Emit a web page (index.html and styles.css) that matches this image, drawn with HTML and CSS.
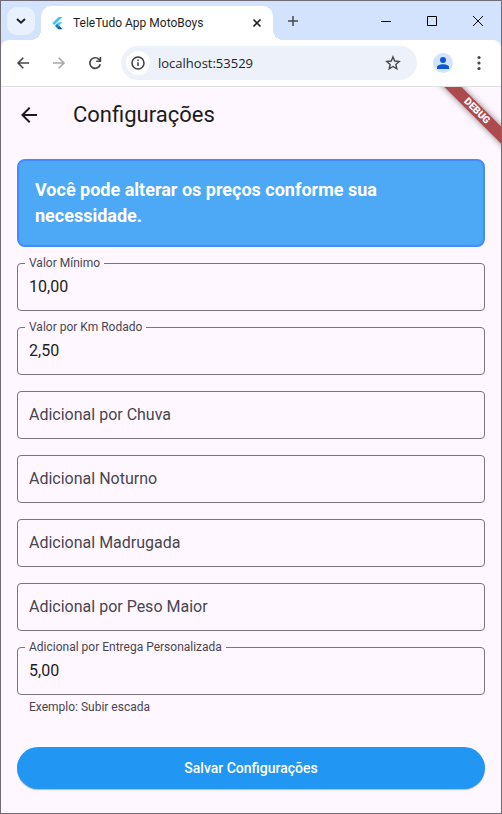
FILE: index.html
```html
<!DOCTYPE html>
<html lang="pt-BR">
<head>
<meta charset="utf-8">
<meta name="viewport" content="width=device-width, initial-scale=1">
<title>TeleTudo App MotoBoys</title>
<link rel="stylesheet" href="styles.css">
</head>
<body>
<div class="window">
  <header class="chrome">
    <div class="tabstrip">
      <button class="tab-search" aria-label="Pesquisar guias">
        <svg width="12" height="12" viewBox="0 0 12 12"><path d="M2 4 6 7.7l4-3.7" fill="none" stroke="#1f1f1f" stroke-width="2"/></svg>
      </button>
      <div class="tab">
        <svg class="favicon" width="16" height="16" viewBox="0 0 16 16"><path d="M9.5 2h4L5.3 10.1 3.3 8z" fill="#47c5fb"/><path d="M9.5 7.3h4l-3.5 3.5-2-2z" fill="#47c5fb"/><path d="m6 10.9 2-2.1 2 2-2 2.1z" fill="#0d7bd0"/><path d="m8 12.9 2-2.1 3.5 3.4h-4z" fill="#07569d"/></svg>
        <span class="tab-title">TeleTudo App MotoBoys</span>
        <button class="icon-button close-tab" aria-label="Fechar guia">
          <svg width="16" height="16" viewBox="0 0 16 16"><path d="m4.5 4.5 7 7m0-7-7 7" fill="none" stroke="#1f1f1f" stroke-width="1.6"/></svg>
        </button>
      </div>
      <button class="icon-button new-tab" aria-label="Nova guia">
        <svg width="16" height="16" viewBox="0 0 16 16"><path d="M8 3v10M3 8h10" fill="none" stroke="#474747" stroke-width="1.5"/></svg>
      </button>
      <div class="window-controls">
        <button class="icon-button" aria-label="Minimizar"><svg width="12" height="12" viewBox="0 0 12 12"><path d="M1 6.5h10" stroke="#000"/></svg></button>
        <button class="icon-button" aria-label="Maximizar"><svg width="12" height="12" viewBox="0 0 12 12"><path d="M1.5 1.5h9v9h-9z" fill="none" stroke="#000"/></svg></button>
        <button class="icon-button" aria-label="Fechar"><svg width="12" height="12" viewBox="0 0 12 12"><path d="m1 1 10 10m0-10L1 11" stroke="#000"/></svg></button>
      </div>
    </div>
    <div class="toolbar">
      <button class="icon-button nav" aria-label="Voltar"><svg width="16" height="16" viewBox="0 0 16 16"><path d="M14 8H3m5.3-5.3L3 8l5.3 5.3" fill="none" stroke="#474747" stroke-width="1.6"/></svg></button>
      <button class="icon-button nav" aria-label="Avançar" disabled><svg width="16" height="16" viewBox="0 0 16 16"><path d="M2 8h11M7.7 2.7 13 8l-5.3 5.3" fill="none" stroke="#a8a8a8" stroke-width="1.6"/></svg></button>
      <button class="icon-button nav" aria-label="Recarregar"><svg width="16" height="16" viewBox="0 0 16 16"><path d="M13.3 9.3A5.3 5.3 0 1 1 12 4.4L13.5 6" fill="none" stroke="#474747" stroke-width="1.7"/><path d="M14.2 2v5h-5V5.4h3.400V2z" fill="#474747"/></svg></button>
      <div class="omnibox">
        <button class="site-info" aria-label="Informações do site"><svg width="16" height="16" viewBox="0 0 16 16"><circle cx="8" cy="8" r="6" fill="none" stroke="#3c3c3c" stroke-width="1.5"/><path d="M8 7.3V11M8 4.6v1.5" stroke="#3c3c3c" stroke-width="1.5"/></svg></button>
        <input class="url" type="text" aria-label="Endereço" value="localhost:53529">
        <button class="icon-button" aria-label="Favoritar"><svg width="16" height="16" viewBox="0 0 16 16"><path d="m8 1.9 1.75 4.15 4.45.4-3.38 2.95 1.01 4.4L8 11.45 4.17 13.8l1.01-4.4L1.8 6.45l4.45-.4z" fill="none" stroke="#474747" stroke-width="1.4"/></svg></button>
      </div>
      <button class="avatar" aria-label="Perfil"><svg width="14" height="14" viewBox="0 0 14 14"><circle cx="7" cy="4" r="3" fill="#0b57d0"/><path d="M1 13v-2c0-2 4-2.8 6-2.8s6 .8 6 2.8v2z" fill="#0b57d0"/></svg></button>
      <button class="icon-button menu" aria-label="Menu"><svg width="16" height="16" viewBox="0 0 16 16" fill="#474747"><circle cx="8" cy="2.5" r="1.6"/><circle cx="8" cy="8" r="1.6"/><circle cx="8" cy="13.5" r="1.6"/></svg></button>
    </div>
  </header>

  <main class="app">
    <div class="debug" aria-hidden="true"><span class="debug-ribbon">DEBUG</span></div>
    <div class="appbar">
      <button class="icon-button back" aria-label="Voltar à tela anterior"><svg width="24" height="24" viewBox="0 0 24 24"><path d="M20 11H7.83l5.59-5.59L12 4l-8 8 8 8 1.41-1.41L7.83 13H20z" fill="#1d1b20"/></svg></button>
      <h1 class="title">Configurações</h1>
    </div>
    <form class="form">
      <p class="notice">Você pode alterar os preços conforme sua necessidade.</p>
      <div class="field"><input id="minimo" type="text" placeholder=" " value="10,00"><label for="minimo">Valor Mínimo</label></div>
      <div class="field"><input id="km" type="text" placeholder=" " value="2,50"><label for="km">Valor por Km Rodado</label></div>
      <div class="field"><input id="chuva" type="text" placeholder=" "><label for="chuva">Adicional por Chuva</label></div>
      <div class="field"><input id="noturno" type="text" placeholder=" "><label for="noturno">Adicional Noturno</label></div>
      <div class="field"><input id="madrugada" type="text" placeholder=" "><label for="madrugada">Adicional Madrugada</label></div>
      <div class="field"><input id="peso" type="text" placeholder=" "><label for="peso">Adicional por Peso Maior</label></div>
      <div class="field"><input id="entrega" type="text" placeholder=" " value="5,00" aria-describedby="entrega-ajuda"><label for="entrega">Adicional por Entrega Personalizada</label>
        <p class="helper" id="entrega-ajuda">Exemplo: Subir escada</p></div>
      <button class="save" type="button">Salvar Configurações</button>
    </form>
  </main>
</div>
</body>
</html>
```
FILE: styles.css
```css
* { box-sizing: border-box; }

body {
  margin: 0;
  font-family: Roboto, sans-serif;
  color: #1d1b20;
}

button, input { font: inherit; }
button { border: 0; padding: 0; background: none; }
svg { display: block; }

.window {
  display: flex;
  flex-direction: column;
  min-height: 100vh;
  border: 1px solid #706b74;
  background: #fef7ff;
}

.icon-button {
  display: flex;
  align-items: center;
  justify-content: center;
  flex: none;
}

/* Browser frame */
.chrome {
  background: #d3e3fd;
  font-family: "Open Sans", sans-serif;
}

.tabstrip {
  display: flex;
  align-items: center;
  height: 39px;
  padding-left: 6px;
}

.tab-search {
  display: flex;
  align-items: center;
  justify-content: center;
  width: 28px;
  height: 28px;
  border-radius: 10px;
  background: #e9f1fe;
}

.tab {
  position: relative;
  display: flex;
  align-items: center;
  align-self: flex-end;
  flex: 0 1 232px;
  min-width: 0;
  height: 34px;
  margin-left: 6px;
  padding: 0 8px;
  border-radius: 10px 10px 0 0;
  background: #fff;
}

.tab::before,
.tab::after {
  content: "";
  position: absolute;
  bottom: 0;
  width: 10px;
  height: 10px;
}
.tab::before { right: 100%; background: radial-gradient(circle at 0 0, transparent 10px, #fff 10px); }
.tab::after { left: 100%; background: radial-gradient(circle at 100% 0, transparent 10px, #fff 10px); }

.tab-title {
  flex: 1;
  min-width: 0;
  margin-left: 8px;
  overflow: hidden;
  font-family: Roboto, sans-serif;
  font-size: 12px;
  line-height: 16px;
  white-space: nowrap;
  color: #1f1f1f;
}

.new-tab { width: 28px; height: 28px; margin-left: 6px; }

.window-controls {
  display: flex;
  align-self: stretch;
  margin-left: auto;
}
.window-controls .icon-button { width: 46px; }

.toolbar {
  display: flex;
  align-items: center;
  height: 47px;
  padding: 0 10px 0 4px;
  border-bottom: 1px solid #dfe1e0;
  border-radius: 8px 8px 0 0;
  background: #fff;
}

.nav { width: 36px; height: 34px; }

.omnibox {
  display: flex;
  align-items: center;
  flex: 1;
  min-width: 0;
  height: 34px;
  margin-left: 8px;
  padding: 0 16px 0 5px;
  border-radius: 17px;
  background: #ecf1fa;
}

.site-info {
  display: flex;
  align-items: center;
  justify-content: center;
  flex: none;
  width: 24px;
  height: 24px;
  border-radius: 12px;
  background: #fff;
}

.url {
  flex: 1;
  min-width: 0;
  padding: 0 8px;
  border: 0;
  outline: 0;
  background: none;
  font-size: 13px;
  color: #1f1f1f;
}

.avatar {
  display: flex;
  align-items: center;
  justify-content: center;
  flex: none;
  width: 20px;
  height: 20px;
  margin-left: 16px;
  border-radius: 50%;
  background: #d3e3fd;
}

.menu { width: 24px; height: 24px; margin-left: 14px; }

/* Application */
.app {
  position: relative;
  flex: 1;
}

.appbar {
  display: flex;
  align-items: center;
  height: 56px;
  padding: 0 16px;
}

.title {
  margin: 0 0 0 32px;
  font-size: 22px;
  font-weight: 400;
  line-height: 28px;
}

.debug {
  position: absolute;
  top: 0;
  right: 0;
  width: 72px;
  height: 72px;
  overflow: hidden;
  pointer-events: none;
}

.debug-ribbon {
  position: absolute;
  top: 18px;
  right: -26px;
  width: 100px;
  height: 12px;
  transform: rotate(45deg);
  background: #ad4a4e;
  box-shadow: 0 0 6px rgba(0, 0, 0, 0.5);
  color: #fff;
  font-size: 10px;
  font-weight: 900;
  line-height: 12px;
  text-align: center;
}

.form {
  display: flex;
  flex-direction: column;
  gap: 16px;
  padding: 16px;
}

.notice {
  margin: 0;
  padding: 16px;
  border: 2px solid #448aff;
  border-radius: 8px;
  background: #4da8f6;
  color: #fff;
  font-size: 18px;
  font-weight: 700;
  line-height: 26px;
}

.field { position: relative; }

.field input {
  display: block;
  width: 100%;
  height: 48px;
  padding: 0 11px 2px;
  border: 1px solid #79747e;
  border-radius: 4px;
  outline: 0;
  background: transparent;
  color: #1d1b20;
  font-size: 16px;
  line-height: 24px;
}

.field label {
  position: absolute;
  top: -8px;
  left: 8px;
  padding: 0 4px;
  background: #fef7ff;
  color: #49454f;
  font-size: 12px;
  line-height: 16px;
}

.field input:placeholder-shown:not(:focus) + label {
  top: 12px;
  font-size: 16px;
  line-height: 24px;
}

.helper {
  margin: 4px 12px 0;
  color: #49454f;
  font-size: 12px;
  line-height: 16px;
}

.save {
  height: 42px;
  margin-top: 16px;
  border-radius: 21px;
  background: #2196f3;
  box-shadow: 0 1px 1px rgba(0, 0, 0, 0.25);
  color: #fff;
  font-size: 14px;
  font-weight: 500;
  line-height: 20px;
}
```
